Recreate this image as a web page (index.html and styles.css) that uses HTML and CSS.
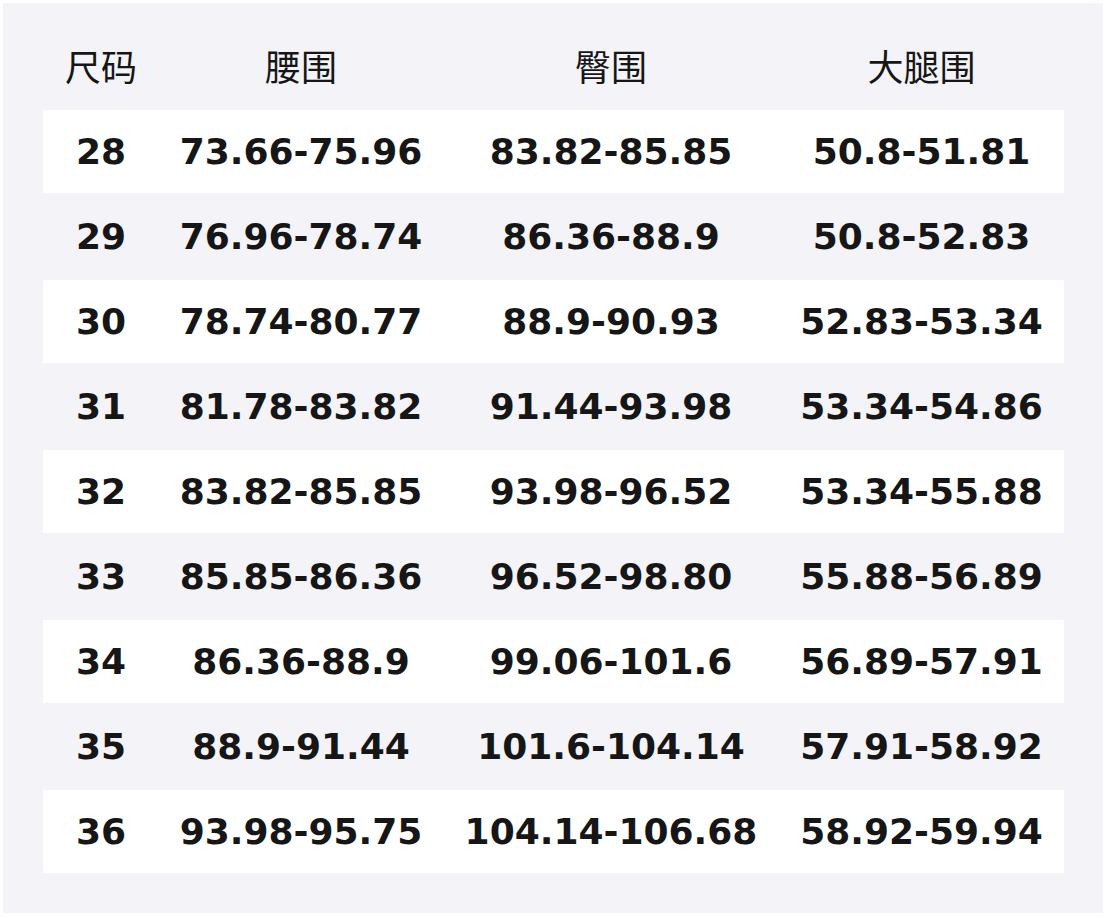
FILE: index.html
```html
<!DOCTYPE html>
<html lang="zh">
<head>
<meta charset="utf-8">
<title>尺码表</title>
<link rel="stylesheet" href="styles.css">
</head>
<body>
<div class="panel">
  <div class="row head">
    <div class="cell">尺码</div><div class="cell">腰围</div><div class="cell">臀围</div><div class="cell">大腿围</div>
  </div>
  <div class="row w"><div class="cell">28</div><div class="cell">73.66-75.96</div><div class="cell">83.82-85.85</div><div class="cell">50.8-51.81</div></div>
  <div class="row"><div class="cell">29</div><div class="cell">76.96-78.74</div><div class="cell">86.36-88.9</div><div class="cell">50.8-52.83</div></div>
  <div class="row w"><div class="cell">30</div><div class="cell">78.74-80.77</div><div class="cell">88.9-90.93</div><div class="cell">52.83-53.34</div></div>
  <div class="row"><div class="cell">31</div><div class="cell">81.78-83.82</div><div class="cell">91.44-93.98</div><div class="cell">53.34-54.86</div></div>
  <div class="row w"><div class="cell">32</div><div class="cell">83.82-85.85</div><div class="cell">93.98-96.52</div><div class="cell">53.34-55.88</div></div>
  <div class="row"><div class="cell">33</div><div class="cell">85.85-86.36</div><div class="cell">96.52-98.80</div><div class="cell">55.88-56.89</div></div>
  <div class="row w"><div class="cell">34</div><div class="cell">86.36-88.9</div><div class="cell">99.06-101.6</div><div class="cell">56.89-57.91</div></div>
  <div class="row"><div class="cell">35</div><div class="cell">88.9-91.44</div><div class="cell">101.6-104.14</div><div class="cell">57.91-58.92</div></div>
  <div class="row w"><div class="cell">36</div><div class="cell">93.98-95.75</div><div class="cell">104.14-106.68</div><div class="cell">58.92-59.94</div></div>
</div>
</body>
</html>
```
FILE: styles.css
```css
html, body {
  margin: 0;
  padding: 0;
  background: #ffffff;
}
body {
  padding: 3px 4px 5px 3px;
}
.panel {
  width: 1100px;
  height: 910px;
  box-sizing: border-box;
  background: #f3f3f8;
  padding: 24px 39px 40px 40px;
  display: flex;
  flex-direction: column;
  gap: 2px;
  color: #161616;
}
.row {
  display: grid;
  grid-template-columns: 116px 284px 336px 285px;
  height: 83px;
  box-sizing: border-box;
  align-items: center;
  font-family: "DejaVu Sans", sans-serif;
  font-weight: bold;
  font-size: 36px;
}
.row.w {
  background: #ffffff;
}
.row.head {
  height: 81px;
  padding-bottom: 6px;
  font-family: "Noto Sans CJK SC", "Noto Sans", sans-serif;
  font-weight: normal;
  font-size: 36px;
}
.cell {
  text-align: center;
  white-space: nowrap;
}
```
